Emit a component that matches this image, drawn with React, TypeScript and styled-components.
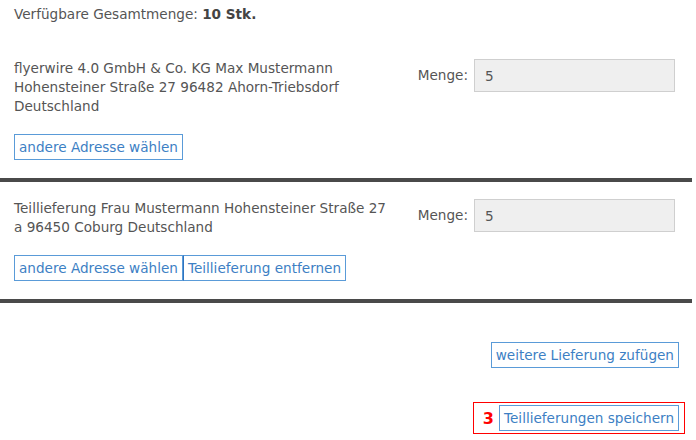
import styled, { createGlobalStyle } from 'styled-components';

const GlobalStyle = createGlobalStyle`
    html, body {
        margin: 0;
        padding: 0;
        background: #fff;
    }
    body {
        font-family: "DejaVu Sans", Verdana, sans-serif;
        font-size: 13.6px;
        color: #555;
    }
`;

interface Delivery {
    id: number;
    address: string;
    qty: string;
    removable?: boolean;
}

const deliveries: Delivery[] = [
    {
        id: 1,
        address: 'flyerwire 4.0 GmbH & Co. KG Max Mustermann Hohensteiner Straße 27 96482 Ahorn-Triebsdorf Deutschland',
        qty: '5',
    },
    {
        id: 2,
        address: 'Teillieferung Frau Mustermann Hohensteiner Straße 27 a 96450 Coburg Deutschland',
        qty: '5',
        removable: true,
    },
];

export default function App() {
    return (
        <>
            <GlobalStyle />
            <Page>
                <Summary>
                    Verfügbare Gesamtmenge: <strong>10 Stk.</strong>
                </Summary>

                {deliveries.map((d) => (
                    <Section key={d.id}>
                        <Row>
                            <Address>{d.address}</Address>
                            <QtyField>
                                <QtyLabel>Menge:</QtyLabel>
                                <QtyInput type="text" defaultValue={d.qty} readOnly />
                            </QtyField>
                        </Row>
                        <ButtonGroup>
                            <LinkButton type="button">andere Adresse wählen</LinkButton>
                            {d.removable && <LinkButton type="button">Teillieferung entfernen</LinkButton>}
                        </ButtonGroup>
                    </Section>
                ))}

                <Footer>
                    <LinkButton type="button" $offset={6}>weitere Lieferung zufügen</LinkButton>
                    <Highlight>
                        <StepNumber>3</StepNumber>
                        <LinkButton type="button">Teillieferungen speichern</LinkButton>
                    </Highlight>
                </Footer>
            </Page>
        </>
    );
}

const Page = styled.div`
    width: 692px;
    padding-top: 5px;
    line-height: 19px;
`;

const Summary = styled.p`
    margin: 0 0 18px;
    padding-left: 14px;

    strong {
        font-weight: 700;
        color: #444;
    }
`;

const Section = styled.div`
    display: flex;
    flex-direction: column;
    gap: 18px;
    padding: 17px 17px 18px 14px;
    border-bottom: 4px solid #4a4a4a;
`;

const Row = styled.div`
    display: flex;
    align-items: flex-start;
    justify-content: space-between;
`;

const Address = styled.div`
    width: 380px;
`;

const QtyField = styled.div`
    display: flex;
    align-items: center;
    gap: 6px;
`;

const QtyLabel = styled.span`
    color: #555;
`;

const QtyInput = styled.input`
    box-sizing: border-box;
    width: 201px;
    height: 33px;
    padding: 0 10px;
    border: 1px solid #cfcfcf;
    background: #efefef;
    font-family: "DejaVu Sans", Verdana, sans-serif;
    font-size: 13.6px;
    color: #555;
    outline: none;
`;

const ButtonGroup = styled.div`
    display: flex;
`;

const LinkButton = styled.button<{ $offset?: number }>`
    box-sizing: border-box;
    height: 26px;
    padding: 0 4px;
    margin-right: ${(p) => p.$offset ?? 0}px;
    border: 1px solid #5a9bd8;
    background: #fff;
    font-family: "DejaVu Sans", Verdana, sans-serif;
    font-size: 13.6px;
    line-height: 16px;
    color: #3d7fc4;
    cursor: pointer;

    & + & {
        border-left-color: #2f74c0;
    }
`;

const Footer = styled.div`
    display: flex;
    flex-direction: column;
    align-items: flex-end;
    gap: 34px;
    padding: 39px 7px 0 0;
`;

const Highlight = styled.div`
    display: flex;
    align-items: center;
    gap: 5px;
    height: 32px;
    box-sizing: border-box;
    padding: 0 5px 0 9px;
    border: 1px solid #ff0000;
`;

const StepNumber = styled.span`
    font-size: 16px;
    font-weight: 700;
    color: #ff0000;
`;
